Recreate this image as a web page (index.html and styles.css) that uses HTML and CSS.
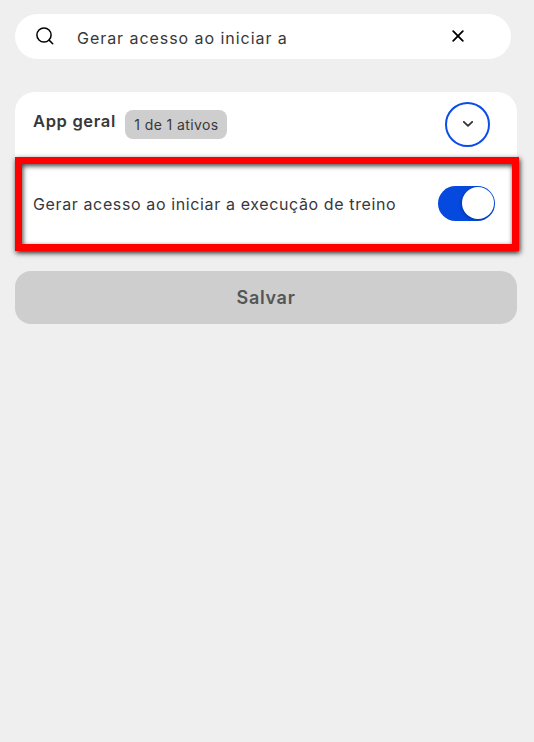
FILE: index.html
```html
<!DOCTYPE html>
<html lang="pt-BR">
<head>
<meta charset="utf-8">
<title>Configurações</title>
<link rel="stylesheet" href="styles.css">
</head>
<body>
<main class="page">
  <div class="search">
    <svg class="search-icon" viewBox="0 0 18 18"><circle cx="8" cy="8" r="7.1"/><path d="M13.1 13.1L16.7 16.7"/></svg>
    <span class="search-text"><span class="query">Gerar acesso ao iniciar a</span></span>
    <svg class="clear-icon" viewBox="0 0 12 12"><path d="M1.2 1.2L10.8 10.8M10.8 1.2L1.2 10.8"/></svg>
  </div>
  <section class="card">
    <header class="card-header">
      <h2 class="title">App geral</h2>
      <span class="badge"><span class="badge-text">1 de 1 ativos</span></span>
      <button class="collapse" aria-label="Recolher"><svg class="chevron" viewBox="0 0 10 6"><path d="M.8 .8L5 4.8L9.2 .8"/></svg></button>
    </header>
    <div class="option">
      <span class="option-text">Gerar acesso ao iniciar a execução de treino</span>
      <span class="toggle"><span class="knob"></span></span>
    </div>
  </section>
  <button class="save"><span class="save-text">Salvar</span></button>
</main>
</body>
</html>
```
FILE: styles.css
```css
* { box-sizing: border-box; }
body {
  margin: 0;
  min-height: 742px;
  background: #efefef;
  color: #37383b;
  font-family: Inter, "Liberation Sans", sans-serif;
}
.page { padding: 14px 17px 0 15px; }
.search {
  display: flex;
  align-items: center;
  width: 496px;
  height: 44.6px;
  padding: 0 47px 0 21px;
  border-radius: 23px;
  background: #fff;
}
svg { fill: none; stroke-linecap: round; stroke-linejoin: round; }
.search-icon { width: 18px; height: 18px; stroke: #000; stroke-width: 1.5; }
.search-text { flex: 1; padding: 4px 0 0 23px; font-size: 16px; line-height: 20px; }
.query { letter-spacing: .95px; }
.clear-icon { width: 12px; height: 12px; margin-bottom: 1px; stroke: #000; stroke-width: 1.8; }
.card {
  margin-top: 33px;
  height: 156.4px;
  border-radius: 20px 20px 0 0;
  background: #fff;
}
.card-header {
  display: flex;
  align-items: center;
  height: 65.4px;
  padding: 0 27px 0 18px;
}
.title { margin: 0 9.5px 7px 0; font-size: 16.5px; line-height: 20px; font-weight: 600; letter-spacing: .66px; white-space: nowrap; }
.badge {
  width: 102px;
  height: 29px;
  border-radius: 8px;
  background: #cecece;
  font-size: 14px;
  line-height: 29px;
  text-align: center;
  white-space: nowrap;
}
.badge-text { letter-spacing: .4px; }
.collapse {
  display: flex;
  align-items: center;
  justify-content: center;
  width: 45px;
  height: 45px;
  margin-left: auto;
  padding: 0;
  border: 2px solid #0b4de9;
  border-radius: 50%;
  background: #fff;
}
.chevron { width: 10px; height: 6px; stroke: #333; stroke-width: 1.8; }
.option {
  display: flex;
  align-items: center;
  justify-content: space-between;
  width: 504px;
  height: 94px;
  padding: 0 17px 1px 11px;
  border: 7px solid #f00;
  box-shadow: 1px 2px 5px rgba(0, 0, 0, .85), inset 1px 2px 5px rgba(0, 0, 0, .75);
}
.option-text { padding-top: 1px; font-size: 16px; line-height: 20px; letter-spacing: .62px; white-space: nowrap; }
.toggle {
  display: flex;
  justify-content: flex-end;
  width: 57px;
  height: 35px;
  padding: 1px 1.5px 1px 1px;
  border-radius: 18px;
  background: #0549df;
  overflow: hidden;
}
.knob { width: 32px; height: 32px; margin-top: .5px; border-radius: 50%; background: #fff; box-shadow: -1px 1px 3px rgba(0, 0, 0, .25); }
.save {
  display: block;
  width: 502px;
  height: 53.5px;
  margin-top: 22.8px;
  padding: 0;
  border: 0;
  border-radius: 16px;
  background: #cecece;
  color: #555;
  font: 600 18px/53px Inter, "Liberation Sans", sans-serif;
}
.save-text { letter-spacing: .7px; }
```
